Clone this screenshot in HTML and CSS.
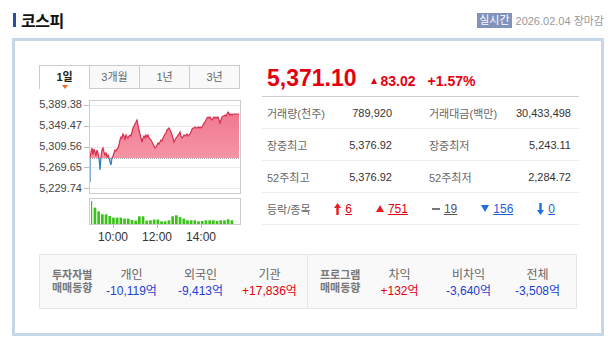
FILE: index.html
```html
<!DOCTYPE html>
<html lang="ko">
<head>
    <meta charset="UTF-8">
    <meta name="viewport" content="width=device-width, initial-scale=1.0">
    <title>코스피</title>
    <link rel="stylesheet" href="styles.css">
</head>
<body>
    <div class="page">
        <div class="head">
            <h2 class="title">코스피</h2>
            <div class="status">
                <span class="badge">실시간</span>
                <span class="date">2026.02.04 장마감</span>
            </div>
        </div>

        <div class="box">
            <div class="main">
                <div class="chart-col">
                    <ul class="tabs">
                        <li class="tab on">1일</li>
                        <li class="tab">3개월</li>
                        <li class="tab">1년</li>
                        <li class="tab">3년</li>
                    </ul>

                    <div class="chart-row">
                        <div class="axis">
                            <span>5,389.38</span>
                            <span>5,349.47</span>
                            <span>5,309.56</span>
                            <span>5,269.65</span>
                            <span>5,229.74</span>
                        </div>
                        <svg class="price-chart" width="157" height="94" viewBox="0 0 157 94">
                            <defs>
                                <clipPath id="above"><rect x="0" y="0" width="152" height="58"></rect></clipPath>
                                <clipPath id="below"><rect x="0" y="58" width="152" height="36"></rect></clipPath>
                                <linearGradient id="pink" x1="0" y1="0" x2="0" y2="1">
                                    <stop offset="0" stop-color="#f0788f"></stop>
                                    <stop offset="1" stop-color="#f7a3b1"></stop>
                                </linearGradient>
                            </defs>
                            <!-- ticks left of the frame -->
                            <g stroke="#bbb" stroke-width="1">
                                <line x1="0" y1="5.5" x2="5" y2="5.5"></line>
                                <line x1="0" y1="26.5" x2="5" y2="26.5"></line>
                                <line x1="0" y1="47.5" x2="5" y2="47.5"></line>
                                <line x1="0" y1="67.5" x2="5" y2="67.5"></line>
                                <line x1="0" y1="88.5" x2="5" y2="88.5"></line>
                            </g>
                            <g transform="translate(5,0)">
                                <g stroke="#ebebeb" stroke-width="1">
                                    <line x1="1" y1="5.5" x2="151" y2="5.5"></line>
                                    <line x1="1" y1="26.5" x2="151" y2="26.5"></line>
                                    <line x1="1" y1="47.5" x2="151" y2="47.5"></line>
                                    <line x1="1" y1="67.5" x2="151" y2="67.5"></line>
                                    <line x1="1" y1="88.5" x2="151" y2="88.5"></line>
                                </g>
                                <polygon clip-path="url(#above)" fill="url(#pink)" points="1,82 1,58 2,52 3,48 4,55 5,49 6,52 7,56 8,50 9,53 10,58 11,70 12,57 13,50 14,48 15,52 16,55 17,53 18,57 19,55 20,58 21,62 22,65 23,58 24,56 25,53 26,50 27,51 28,49 29,48 30,45 31,40 32,37 33,38 34,34 35,36 36,39 37,35 38,37 39,38 40,36 41,35 42,36 43,32 44,28 45,26 46,24 47,22 48,20 49,25 50,30 51,34 52,38 53,42 54,38 55,36 56,38 57,35 58,37 59,35 60,38 61,39 62,40 63,42 64,44 65,46 66,48 67,47 68,45 69,43 70,44 71,42 72,40 73,41 74,38 75,36 76,34 77,33 78,30 79,29 80,28 81,30 82,32 83,35 84,38 85,42 86,40 87,38 88,37 89,35 90,34 91,32 92,36 93,38 94,37 95,35 96,36 97,35 98,34 99,36 100,35 101,34 102,32 103,29 104,28 105,28 106,27 107,28 108,28 109,27 110,28 111,27 112,28 113,27 114,25 115,23 116,22 117,20 118,18 119,17 120,18 121,17 122,19 123,20 124,18 125,17 126,18 127,17 128,18 129,17 130,20 131,23 132,20 133,17 134,16 135,16 136,15 137,16 138,14 139,12 140,13 141,15 142,14 143,15 144,14 145,14 146,14 147,14 148,14 149,14 150,14 150,58 1,58"></polygon>
                                <polygon clip-path="url(#below)" fill="#bcd8ee" points="1,82 1,58 2,52 3,48 4,55 5,49 6,52 7,56 8,50 9,53 10,58 11,70 12,57 13,50 14,48 15,52 16,55 17,53 18,57 19,55 20,58 21,62 22,65 23,58 24,56 25,53 26,50 1,58"></polygon>
                                <line x1="1" y1="58.5" x2="151" y2="58.5" stroke="#aaa" stroke-width="1" stroke-dasharray="1 1"></line>
                                <polyline class="line-up" clip-path="url(#above)" points="1,82 1,58 2,52 3,48 4,55 5,49 6,52 7,56 8,50 9,53 10,58 11,70 12,57 13,50 14,48 15,52 16,55 17,53 18,57 19,55 20,58 21,62 22,65 23,58 24,56 25,53 26,50 27,51 28,49 29,48 30,45 31,40 32,37 33,38 34,34 35,36 36,39 37,35 38,37 39,38 40,36 41,35 42,36 43,32 44,28 45,26 46,24 47,22 48,20 49,25 50,30 51,34 52,38 53,42 54,38 55,36 56,38 57,35 58,37 59,35 60,38 61,39 62,40 63,42 64,44 65,46 66,48 67,47 68,45 69,43 70,44 71,42 72,40 73,41 74,38 75,36 76,34 77,33 78,30 79,29 80,28 81,30 82,32 83,35 84,38 85,42 86,40 87,38 88,37 89,35 90,34 91,32 92,36 93,38 94,37 95,35 96,36 97,35 98,34 99,36 100,35 101,34 102,32 103,29 104,28 105,28 106,27 107,28 108,28 109,27 110,28 111,27 112,28 113,27 114,25 115,23 116,22 117,20 118,18 119,17 120,18 121,17 122,19 123,20 124,18 125,17 126,18 127,17 128,18 129,17 130,20 131,23 132,20 133,17 134,16 135,16 136,15 137,16 138,14 139,12 140,13 141,15 142,14 143,15 144,14 145,14 146,14 147,14 148,14 149,14 150,14"></polyline>
                                <polyline class="line-down" clip-path="url(#below)" points="1,82 1,58 2,52 3,48 4,55 5,49 6,52 7,56 8,50 9,53 10,58 11,70 12,57 13,50 14,48 15,52 16,55 17,53 18,57 19,55 20,58 21,62 22,65 23,58 24,56 25,53 26,50"></polyline>
                                <rect x="0.5" y="0.5" width="151" height="93" fill="none" stroke="#ccc"></rect>
                            </g>
                        </svg>
                    </div>

                    <svg class="volume" width="157" height="30" viewBox="0 0 157 30">
                        <g transform="translate(5,0)">
                            <g fill="#3cc21b">
                                <rect x="2" y="3" width="1.2" height="23"></rect>
                                <rect x="4.6" y="9.6" width="2.7" height="16.4"></rect>
                                <rect x="8.3" y="13.3" width="2.7" height="12.7"></rect>
                                <rect x="12" y="16.3" width="2.7" height="9.7"></rect>
                                <rect x="15.7" y="16.3" width="2.7" height="9.7"></rect>
                                <rect x="19.4" y="18" width="2.7" height="8"></rect>
                                <rect x="23.1" y="19.6" width="2.7" height="6.4"></rect>
                                <rect x="26.8" y="19.6" width="2.7" height="6.4"></rect>
                                <rect x="30.5" y="19.6" width="2.7" height="6.4"></rect>
                                <rect x="34.2" y="20.6" width="2.7" height="5.4"></rect>
                                <rect x="37.9" y="20.6" width="2.7" height="5.4"></rect>
                                <rect x="41.6" y="22" width="2.7" height="4"></rect>
                                <rect x="45.3" y="22.6" width="2.7" height="3.4"></rect>
                                <rect x="49" y="18.3" width="2.7" height="7.7"></rect>
                                <rect x="52.7" y="18.3" width="2.7" height="7.7"></rect>
                                <rect x="56.4" y="22.6" width="2.7" height="3.4"></rect>
                                <rect x="60.1" y="22.3" width="2.7" height="3.7"></rect>
                                <rect x="63.8" y="21.6" width="2.7" height="4.4"></rect>
                                <rect x="67.5" y="21.6" width="2.7" height="4.4"></rect>
                                <rect x="71.2" y="23.3" width="2.7" height="2.7"></rect>
                                <rect x="74.9" y="23.3" width="2.7" height="2.7"></rect>
                                <rect x="78.6" y="22.3" width="2.7" height="3.7"></rect>
                                <rect x="82.3" y="18.3" width="2.7" height="7.7"></rect>
                                <rect x="86" y="17.3" width="2.7" height="8.7"></rect>
                                <rect x="89.7" y="19" width="2.7" height="7"></rect>
                                <rect x="93.4" y="20.6" width="2.7" height="5.4"></rect>
                                <rect x="97.1" y="22.3" width="2.7" height="3.7"></rect>
                                <rect x="100.8" y="22.3" width="2.7" height="3.7"></rect>
                                <rect x="104.5" y="22.3" width="2.7" height="3.7"></rect>
                                <rect x="108.2" y="23.3" width="2.7" height="2.7"></rect>
                                <rect x="111.9" y="23" width="2.7" height="3"></rect>
                                <rect x="115.6" y="22.3" width="2.7" height="3.7"></rect>
                                <rect x="119.3" y="22.3" width="2.7" height="3.7"></rect>
                                <rect x="123" y="22.3" width="2.7" height="3.7"></rect>
                                <rect x="126.7" y="23" width="2.7" height="3"></rect>
                                <rect x="130.4" y="22.3" width="2.7" height="3.7"></rect>
                                <rect x="134.1" y="22.3" width="2.7" height="3.7"></rect>
                                <rect x="137.8" y="21.3" width="2.7" height="4.7"></rect>
                                <rect x="141.5" y="22.3" width="2.7" height="3.7"></rect>
                            </g>
                            <rect x="0.5" y="0.5" width="151" height="26" fill="none" stroke="#ccc"></rect>
                            <g stroke="#bbb">
                                <line x1="24.5" y1="27" x2="24.5" y2="30"></line>
                                <line x1="68.5" y1="27" x2="68.5" y2="30"></line>
                                <line x1="112.5" y1="27" x2="112.5" y2="30"></line>
                            </g>
                        </g>
                    </svg>

                    <div class="times">
                        <span>10:00</span>
                        <span>12:00</span>
                        <span>14:00</span>
                    </div>
                </div>

                <div class="info">
                    <div class="quote">
                        <span class="price">5,371.10</span>
                        <span class="change"><i class="tri-up"></i>83.02</span>
                        <span class="rate">+1.57%</span>
                    </div>
                    <div class="row">
                        <span class="lbl">거래량(천주)</span>
                        <span class="val">789,920</span>
                        <span class="lbl lbl-2">거래대금(백만)</span>
                        <span class="val">30,433,498</span>
                    </div>
                    <div class="row">
                        <span class="lbl">장중최고</span>
                        <span class="val">5,376.92</span>
                        <span class="lbl lbl-2">장중최저</span>
                        <span class="val">5,243.11</span>
                    </div>
                    <div class="row">
                        <span class="lbl">52주최고</span>
                        <span class="val">5,376.92</span>
                        <span class="lbl lbl-2">52주최저</span>
                        <span class="val">2,284.72</span>
                    </div>
                    <div class="row row-count">
                        <span class="lbl">등락/종목</span>
                        <span class="cnt">
                            <svg width="7" height="12" viewBox="0 0 7 12"><path d="M3.5 0 L7 5 H4.7 V12 H2.3 V5 H0 Z" fill="#ec1c24"></path></svg>
                            <a class="num up">6</a>
                        </span>
                        <span class="cnt">
                            <svg width="8" height="7" viewBox="0 0 8 7"><path d="M4 0 L8 7 H0 Z" fill="#ec1c24"></path></svg>
                            <a class="num up">751</a>
                        </span>
                        <span class="cnt">
                            <svg width="8" height="7" viewBox="0 0 8 7"><rect x="0" y="3" width="8" height="2" fill="#777"></rect></svg>
                            <a class="num flat">19</a>
                        </span>
                        <span class="cnt">
                            <svg width="8" height="7" viewBox="0 0 8 7"><path d="M0 0 H8 L4 7 Z" fill="#1e6fe0"></path></svg>
                            <a class="num down">156</a>
                        </span>
                        <span class="cnt">
                            <svg width="7" height="12" viewBox="0 0 7 12"><path d="M2.3 0 H4.7 V7 H7 L3.5 12 L0 7 H2.3 Z" fill="#1e6fe0"></path></svg>
                            <a class="num down">0</a>
                        </span>
                    </div>
                </div>
            </div>

            <div class="flow">
                <div class="flow-half">
                    <div class="flow-title">투자자별<br>매매동향</div>
                    <div class="flow-col"><span class="flow-name">개인</span><span class="flow-val minus">-10,119억</span></div>
                    <div class="flow-col"><span class="flow-name">외국인</span><span class="flow-val minus">-9,413억</span></div>
                    <div class="flow-col"><span class="flow-name">기관</span><span class="flow-val plus">+17,836억</span></div>
                </div>
                <div class="flow-half">
                    <div class="flow-title">프로그램<br>매매동향</div>
                    <div class="flow-col"><span class="flow-name">차익</span><span class="flow-val plus">+132억</span></div>
                    <div class="flow-col"><span class="flow-name">비차익</span><span class="flow-val minus">-3,640억</span></div>
                    <div class="flow-col"><span class="flow-name">전체</span><span class="flow-val minus">-3,508억</span></div>
                </div>
            </div>
        </div>
    </div>
</body>
</html>
```

FILE: styles.css
```css
body {
    margin: 0;
    font-family: "Liberation Sans", "Noto Sans CJK KR", sans-serif;
    color: #333333;
    background-color: #ffffff;
}

.page {
    width: 592px;
    padding: 0 8px 0 12px;
}

.head {
    display: flex;
    justify-content: space-between;
    align-items: center;
    height: 38px;
    padding-top: 2px;
    box-sizing: border-box;
}

.title {
    display: flex;
    align-items: center;
    margin: 0;
    padding-left: 1px;
    font-size: 16px;
    font-weight: bold;
    color: #111111;
    letter-spacing: -0.5px;
}

.title::before {
    content: "";
    width: 3px;
    height: 14px;
    margin-right: 5px;
    background-color: #2c4c9c;
}

.status {
    display: flex;
    align-items: center;
    font-size: 11px;
    color: #999999;
}

.badge {
    margin-right: 4px;
    padding: 1px 2px;
    font-size: 11px;
    line-height: 13px;
    background-color: #8193bd;
    color: #ffffff;
}

.box {
    border: 3px solid #c7d7ea;
    padding: 24px;
}

.main {
    display: flex;
    gap: 21px;
}

.chart-col {
    width: 202px;
}

.tabs {
    display: flex;
    margin: 0;
    padding: 0;
    list-style: none;
}

.tab {
    position: relative;
    width: 50px;
    height: 24px;
    box-sizing: border-box;
    border-top: 1px solid #cccccc;
    border-left: 1px solid #cccccc;
    border-bottom: 1px solid #cccccc;
    background-color: #f9f9f9;
    font-size: 11px;
    line-height: 22px;
    text-align: center;
    color: #666666;
}

.tab:last-child {
    width: 51px;
    border-right: 1px solid #cccccc;
}

.tab.on {
    border-bottom: none;
    background-color: #ffffff;
    color: #222222;
    font-weight: bold;
}

.tab.on::after {
    content: "";
    position: absolute;
    left: 22px;
    bottom: 0;
    border-left: 3px solid transparent;
    border-right: 3px solid transparent;
    border-top: 4px solid #f26b1d;
}

.chart-row {
    display: flex;
    align-items: flex-start;
    margin-top: 11px;
}

.axis {
    display: flex;
    flex-direction: column;
    width: 45px;
    margin: -6px 0 -5px;
    padding-right: 2px;
    box-sizing: border-box;
    font-size: 11px;
    line-height: 21px;
    text-align: right;
    color: #444444;
}

.price-chart,
.volume {
    display: block;
}

.line-up {
    fill: none;
    stroke: #d7304f;
    stroke-width: 1.2;
}

.line-down {
    fill: none;
    stroke: #2a7fc1;
    stroke-width: 1.2;
}

.volume {
    margin: 4px 0 0 45px;
}

.times {
    display: flex;
    margin: 2px 0 0 52px;
    font-size: 12px;
    line-height: 15px;
    color: #333333;
}

.times span {
    width: 44px;
    text-align: center;
}

.info {
    width: 317px;
}

.quote {
    display: flex;
    align-items: baseline;
    height: 32px;
    box-sizing: border-box;
    padding: 0 5px;
    border-bottom: 1px solid #cccccc;
    line-height: 26px;
    font-weight: bold;
    color: #e4000f;
}

.price {
    font-size: 23px;
}

.change {
    margin-left: 14px;
    font-size: 14px;
}

.tri-up {
    display: inline-block;
    margin-right: 4px;
    vertical-align: 2px;
    border-left: 3px solid transparent;
    border-right: 3px solid transparent;
    border-bottom: 6px solid #e4000f;
}

.rate {
    margin-left: 12px;
    font-size: 14px;
}

.row {
    display: grid;
    grid-template-columns: 60px 65px 99px 80px;
    align-items: center;
    height: 32px;
    box-sizing: border-box;
    padding-left: 5px;
    border-bottom: 1px solid #ececec;
    font-size: 11px;
}

.lbl {
    color: #666666;
    white-space: nowrap;
}

.lbl-2 {
    padding-left: 37px;
}

.val {
    text-align: right;
    color: #333333;
}

.row-count {
    display: flex;
}

.row-count .lbl {
    width: 70px;
}

.cnt {
    display: flex;
    align-items: center;
    gap: 4px;
    margin-right: 24px;
}

.num {
    font-size: 12px;
    text-decoration: underline;
}

.num.up {
    color: #e4000f;
}

.num.flat {
    color: #555555;
}

.num.down {
    color: #1e62d6;
}

.flow {
    display: flex;
    height: 55px;
    box-sizing: border-box;
    margin-top: 9px;
    border: 1px solid #e6e6e6;
    background-color: #f9f9f9;
}

.flow-half {
    display: flex;
    align-items: flex-start;
    width: 269px;
    padding: 12px 0 0 12px;
    box-sizing: border-box;
}

.flow-half:first-child {
    border-right: 1px solid #e6e6e6;
}

.flow-title {
    width: 45px;
    padding-top: 2px;
    font-size: 11px;
    font-weight: bold;
    line-height: 13px;
    color: #777777;
}

.flow-col {
    display: flex;
    flex-direction: column;
    align-items: center;
    width: 69px;
    font-size: 12px;
    line-height: 16px;
}

.flow-name {
    color: #666666;
}

.flow-val.minus {
    color: #1c3fd4;
}

.flow-val.plus {
    color: #e4000f;
}
```
